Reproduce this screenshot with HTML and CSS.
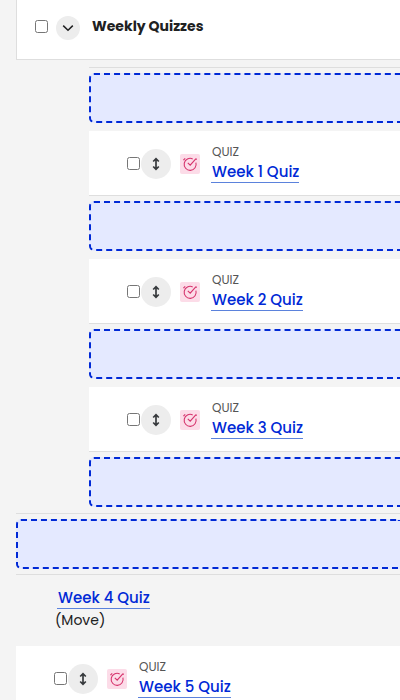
FILE: index.html
```
<!DOCTYPE html>
<html lang="en">
<head>
<meta charset="utf-8">
<meta name="viewport" content="width=device-width, initial-scale=1">
<title>Weekly Quizzes</title>
<link rel="stylesheet" href="styles.css">
</head>
<body>
<svg class="sprite" aria-hidden="true">
  <symbol id="chevron" viewBox="0 0 12 12"><path d="M1.2 3.6 6 8.3l4.8-4.7" fill="none" stroke="currentColor" stroke-width="1.5"/></symbol>
  <symbol id="move" viewBox="0 0 14 14"><path d="M7 2.2v9.6M4.2 4.5 7 1.7l2.8 2.8M4.2 9.5 7 12.3l2.8-2.8" fill="none" stroke="currentColor" stroke-width="1.7"/></symbol>
  <symbol id="quiz" viewBox="0 0 20 20"><path d="M15.9 8.6A6 6 0 1 1 12.7 4.9M7.8 8.8l2.4 2.4 5.8-6.6M3.4 6.2l1.8-1.8M16.6 5.6l-.6-1" fill="none" stroke="currentColor" stroke-width="1.1"/></symbol>
</svg>
<main class="course">
  <header class="section">
    <input type="checkbox" aria-label="Select Weekly Quizzes">
    <button class="round toggle" aria-label="Collapse section"><svg><use href="#chevron"/></svg></button>
    <h2>Weekly Quizzes</h2>
  </header>
  <ul class="quizzes">
    <li class="drop"></li>
    <li class="row">
      <input type="checkbox" aria-label="Select Week 1 Quiz">
      <button class="round" aria-label="Move Week 1 Quiz"><svg><use href="#move"/></svg></button>
      <span class="badge"><svg><use href="#quiz"/></svg></span>
      <div class="info"><span class="kind">QUIZ</span><a href="#week1">Week 1 Quiz</a></div>
    </li>
    <li class="drop"></li>
    <li class="row">
      <input type="checkbox" aria-label="Select Week 2 Quiz">
      <button class="round" aria-label="Move Week 2 Quiz"><svg><use href="#move"/></svg></button>
      <span class="badge"><svg><use href="#quiz"/></svg></span>
      <div class="info"><span class="kind">QUIZ</span><a href="#week2">Week 2 Quiz</a></div>
    </li>
    <li class="drop"></li>
    <li class="row">
      <input type="checkbox" aria-label="Select Week 3 Quiz">
      <button class="round" aria-label="Move Week 3 Quiz"><svg><use href="#move"/></svg></button>
      <span class="badge"><svg><use href="#quiz"/></svg></span>
      <div class="info"><span class="kind">QUIZ</span><a href="#week3">Week 3 Quiz</a></div>
    </li>
    <li class="drop"></li>
  </ul>
  <div class="between"><div class="drop"></div></div>
  <div class="moving"><a href="#week4">Week 4 Quiz</a><span>(Move)</span></div>
  <div class="row">
    <input type="checkbox" aria-label="Select Week 5 Quiz">
    <button class="round" aria-label="Move Week 5 Quiz"><svg><use href="#move"/></svg></button>
    <span class="badge"><svg><use href="#quiz"/></svg></span>
    <div class="info"><span class="kind">QUIZ</span><a href="#week5">Week 5 Quiz</a></div>
  </div>
</main>
</body>
</html>
```
FILE: styles.css
```
* { box-sizing: border-box; }
html { background: #f4f4f4; }
body {
  margin: 0;
  color: #202122;
  font: 15px/22px Poppins, Inter, "Open Sans", sans-serif;
}
.sprite { display: none; }
.course { margin-left: 16px; }
input { width: 13px; height: 13px; margin: 0; flex: none; }
.section {
  display: flex;
  align-items: center;
  height: 60px;
  padding: 0 18px 6px;
  background: #fff;
  border: solid #dedede;
  border-width: 0 0 1px 1px;
}
.section h2 { margin: 0 0 0 12px; font-size: 14px; line-height: 20px; padding-bottom: 2px; font-weight: 700; }
.round {
  display: grid;
  place-items: center;
  flex: none;
  width: 30px;
  height: 30px;
  padding: 0;
  border: 0;
  border-radius: 50%;
  background: #ededed;
  color: #36393c;
}
.round svg { width: 14px; height: 14px; }
.toggle { width: 24px; height: 24px; margin: 2px 0 0 8px; color: #202122; }
.toggle svg { width: 12px; height: 12px; }
.quizzes {
  list-style: none;
  margin: 7px 0 0 73px;
  padding: 5px 0 6px;
  border-top: 1px solid #dedede;
}
.drop {
  height: 50px;
  border: 2px dashed #0029d6;
  border-right: 0;
  border-radius: 5px 0 0 5px;
  background: #e4e9ff;
}
.row {
  display: flex;
  align-items: center;
  height: 65px;
  padding: 1px 0 0 38px;
  background: #fff;
  border-bottom: 1px solid #dedede;
}
.quizzes .row { margin: 8px 0 5px; }
.row .round { margin-left: 1px; }
.badge { width: 20px; height: 20px; margin: 0 11px 0 9px; border-radius: 2px; background: #fcdce8; color: #d6336c; }
.badge svg { display: block; width: 20px; height: 20px; }
.info { display: flex; flex-direction: column; align-items: flex-start; padding-bottom: 2px; }
.kind { font-size: 12px; line-height: 18px; color: #555; padding-left: 1px; }
a {
  color: #0029d6;
  font-weight: 500;
  line-height: 21px;
  text-decoration: none;
  border-bottom: 1px solid #5b82dc;
  padding-left: 1px;
}
.between { padding: 5px 0; border: solid #dedede; border-width: 1px 0; }
.moving {
  display: flex;
  flex-direction: column;
  align-items: flex-start;
  padding: 12px 39px 15px;
}
.moving a { margin-left: 2px; }
.moving span { font-size: 14px; }
```
